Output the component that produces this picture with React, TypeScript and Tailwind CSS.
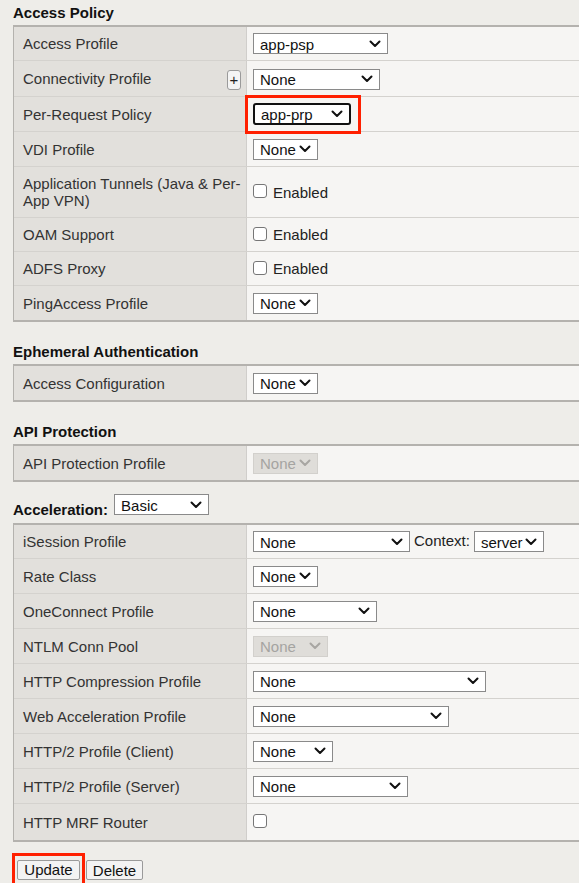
import type { ReactNode } from 'react'
import clsx from 'clsx'

function Chevron({ disabled }: { disabled?: boolean }) {
  return (
    <svg width="12" height="8" viewBox="0 0 12 8" className="shrink-0">
      <path
        d="M1.5 1.5 L6 6 L10.5 1.5"
        fill="none"
        stroke={disabled ? '#a8a6a2' : '#111'}
        strokeWidth="2"
        strokeLinecap="round"
        strokeLinejoin="round"
      />
    </svg>
  )
}

function Select({
  value,
  className,
  disabled,
  focused,
}: {
  value: string
  className: string
  disabled?: boolean
  focused?: boolean
}) {
  return (
    <div
      className={clsx(
        'inline-flex shrink-0 items-center justify-between pl-[6px] pr-[6px] text-[15px] leading-none',
        focused
          ? 'h-[22px] border-2 border-[#111] rounded-[3px] bg-white text-[#111] pl-[5px]'
          : disabled
            ? 'h-[21px] border border-[#d2d0cc] bg-[#dfddd9] text-[#a5a4a1]'
            : 'h-[21px] border border-[#8a8a8a] bg-white text-[#111]',
        className
      )}
    >
      <span className="pt-[1px]">{value}</span>
      <Chevron disabled={disabled} />
    </div>
  )
}

function Checkbox({ label }: { label?: string }) {
  return (
    <div className="flex items-center gap-[6px]">
      <span className="w-[14px] h-[14px] rounded-[3px] border border-[#767676] bg-white -mt-[2px]" />
      {label && <span className="text-[15px] text-[#222] pt-[2px]">{label}</span>}
    </div>
  )
}

type Row = { label: ReactNode; value: ReactNode; h: string; extra?: ReactNode }

function PropTable({ rows }: { rows: Row[] }) {
  return (
    <div className="ml-[13px] w-[620px] border-l border-y-2 border-[#b4b2ae]">
      {rows.map((r, i) => (
        <div
          key={i}
          className={clsx('flex', r.h, i < rows.length - 1 && 'border-b border-[#d4d2ce]')}
        >
          <div className="w-[233px] shrink-0 bg-[#e2e0dc] border-r border-[#d0cecb] pl-[9px] pr-[5px] flex items-center justify-between text-[15px] leading-[17px] text-[#333]">
            <span>{r.label}</span>
            {r.extra}
          </div>
          <div className="flex-1 bg-[#f6f5f3] pl-[6px] flex items-center">{r.value}</div>
        </div>
      ))}
    </div>
  )
}

function Heading({ children, className }: { children: ReactNode; className?: string }) {
  return (
    <div className={clsx('h-[25px] pt-[4px] pl-[13px] text-[15px] leading-[17px] font-bold text-[#111]', className)}>
      {children}
    </div>
  )
}

export default function App() {
  const accessRows: Row[] = [
    { label: 'Access Profile', h: 'h-[34px]', value: <Select value="app-psp" className="w-[135px]" /> },
    {
      label: 'Connectivity Profile',
      h: 'h-[36px]',
      extra: (
        <span className="w-[14px] h-[20px] rounded-[3px] border border-[#9a9a9a] bg-[#f4f4f4] flex items-center justify-center text-[15px] text-[#222] mt-[2px]">
          +
        </span>
      ),
      value: <Select value="None" className="w-[127px] mt-[1px]" />,
    },
    {
      label: 'Per-Request Policy',
      h: 'h-[35px]',
      value: (
        <div className="relative mt-[2px]">
          <Select value="app-prp" className="w-[98px]" focused />
          <span className="absolute -left-[8px] -right-[10px] -top-[8px] -bottom-[7px] border-[3px] border-[#ff2000]" />
        </div>
      ),
    },
    { label: 'VDI Profile', h: 'h-[35px]', value: <Select value="None" className="w-[65px]" /> },
    {
      label: (
        <>
          Application Tunnels (Java &amp; Per-
          <br />
          App VPN)
        </>
      ),
      h: 'h-[51px]',
      value: <Checkbox label="Enabled" />,
    },
    { label: 'OAM Support', h: 'h-[34px]', value: <Checkbox label="Enabled" /> },
    { label: 'ADFS Proxy', h: 'h-[34px]', value: <Checkbox label="Enabled" /> },
    { label: 'PingAccess Profile', h: 'h-[34px]', value: <Select value="None" className="w-[65px]" /> },
  ]

  const accelRows: Row[] = [
    {
      label: 'iSession Profile',
      h: 'h-[34px]',
      value: (
        <div className="flex items-center gap-[4px]">
          <Select value="None" className="w-[157px]" />
          <span className="text-[15px] text-[#222]">Context:</span>
          <Select value="server" className="w-[70px]" />
        </div>
      ),
    },
    { label: 'Rate Class', h: 'h-[35px]', value: <Select value="None" className="w-[65px]" /> },
    { label: 'OneConnect Profile', h: 'h-[35px]', value: <Select value="None" className="w-[124px]" /> },
    { label: 'NTLM Conn Pool', h: 'h-[35px]', value: <Select value="None" className="w-[75px]" disabled /> },
    { label: 'HTTP Compression Profile', h: 'h-[35px]', value: <Select value="None" className="w-[233px]" /> },
    { label: 'Web Acceleration Profile', h: 'h-[35px]', value: <Select value="None" className="w-[196px]" /> },
    { label: 'HTTP/2 Profile (Client)', h: 'h-[35px]', value: <Select value="None" className="w-[80px]" /> },
    { label: 'HTTP/2 Profile (Server)', h: 'h-[35px]', value: <Select value="None" className="w-[155px]" /> },
    { label: 'HTTP MRF Router', h: 'h-[36px]', value: <Checkbox /> },
  ]

  return (
    <div
      className="min-h-screen h-[883px] overflow-hidden bg-[#eeede9]"
      style={{ fontFamily: '"Liberation Sans", Arial, sans-serif' }}
    >
      <Heading>Access Policy</Heading>
      <PropTable rows={accessRows} />

      <Heading className="mt-[17px]">Ephemeral Authentication</Heading>
      <PropTable
        rows={[{ label: 'Access Configuration', h: 'h-[34px]', value: <Select value="None" className="w-[65px]" /> }]}
      />

      <Heading className="mt-[17px]">API Protection</Heading>
      <PropTable
        rows={[
          { label: 'API Protection Profile', h: 'h-[34px]', value: <Select value="None" className="w-[65px]" disabled /> },
        ]}
      />

      <div className="h-[41px] flex items-start pl-[13px]">
        <span className="mt-[19px] text-[15px] leading-[17px] font-bold text-[#111]">Acceleration:</span>
        <Select value="Basic" className="w-[95px] ml-[6px] mt-[12px]" />
      </div>
      <PropTable rows={accelRows} />

      <div className="flex items-center pl-[17px] mt-[16px] gap-[6px]">
        <div className="relative">
          <button className="h-[20px] w-[63px] rounded-[2px] border border-[#9a9a9a] bg-[#f3f3f3] text-[15px] leading-none text-[#111]">
            Update
          </button>
          <span className="absolute -left-[5px] -right-[5px] -top-[5px] -bottom-[5px] border-[3px] border-[#ff2000]" />
        </div>
        <button className="h-[20px] w-[57px] rounded-[2px] border border-[#9a9a9a] bg-[#f3f3f3] text-[15px] leading-none text-[#111]">
          Delete
        </button>
      </div>
    </div>
  )
}
